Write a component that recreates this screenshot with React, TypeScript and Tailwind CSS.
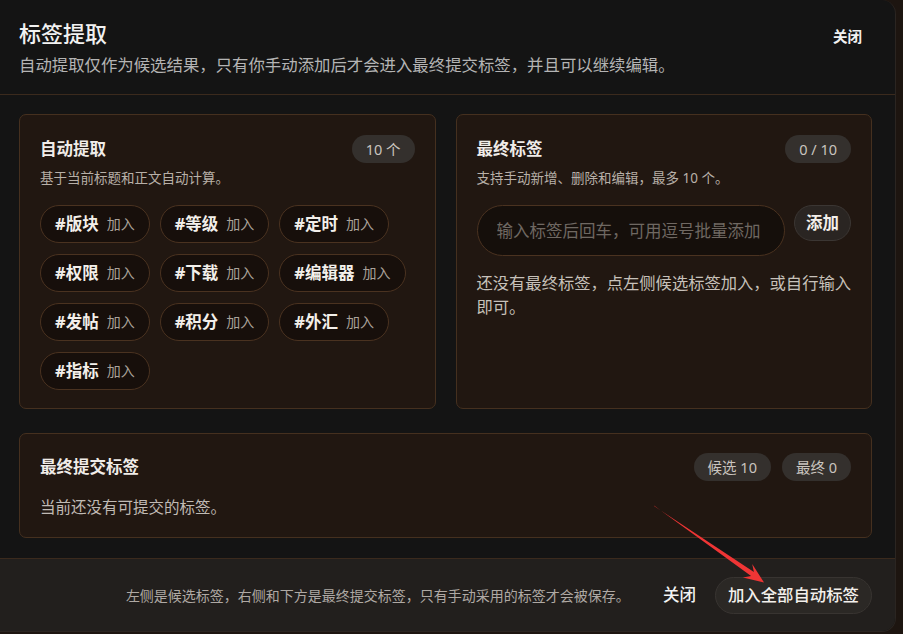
import React from "react";

const FONT = '"Noto Sans", "Noto Sans CJK SC", sans-serif';

const candidates = ["版块", "等级", "定时", "权限", "下载", "编辑器", "发帖", "积分", "外汇", "指标"];

function Pill({ children }: { children: React.ReactNode }) {
  return (
    <span className="inline-flex h-[28px] items-center rounded-full bg-[#34302d] px-[14px] text-[14.5px] leading-none text-[#c9c4bf]">
      {children}
    </span>
  );
}

function Chip({ label }: { label: string }) {
  return (
    <button className="flex h-[38px] items-center gap-[8px] rounded-full border border-[#4a3220] bg-[#170f0b] px-[14px]">
      <span className="text-[16.5px] font-bold leading-none text-[#f3efea]">#{label}</span>
      <span className="text-[14px] leading-none text-[#aaa29a]">加入</span>
    </button>
  );
}

export default function App() {
  return (
    <div className="relative h-[634px] w-[903px] overflow-hidden bg-[#1d1510]" style={{ fontFamily: FONT }}>
      <div className="flex h-[632px] w-[896px] flex-col overflow-hidden rounded-r-[14px] border-r border-b border-[#2b2521] bg-[#141414]">
        {/* header */}
        <div className="flex items-start justify-between border-b border-[#3b2a1d] pb-[17px] pl-[19px] pr-[23px] pt-[18px]">
          <div>
            <h1 className="text-[22px] font-medium leading-[30px] text-[#f1f1f1]">标签提取</h1>
            <p className="mt-[5px] text-[16.4px] leading-[24px] text-[#b4b4b4]">
              自动提取仅作为候选结果，只有你手动添加后才会进入最终提交标签，并且可以继续编辑。
            </p>
          </div>
          <button className="mt-[4px] h-[30px] px-[10px] text-[14.5px] font-semibold text-[#f1f1f1]">关闭</button>
        </div>

        {/* body */}
        <div className="flex-1 pb-[20px] pl-[19px] pr-[23px] pt-[19px]">
          <div className="grid grid-cols-2 gap-[20px]">
            {/* candidates */}
            <section className="h-[295px] rounded-[7px] border border-[#45301f] bg-[#211711] p-[20px]">
              <div className="flex h-[28px] items-center justify-between">
                <h2 className="text-[16.5px] font-semibold leading-none text-[#f0ece8]">自动提取</h2>
                <Pill>10 个</Pill>
              </div>
              <p className="mt-[5px] text-[13.5px] leading-[20px] text-[#b8b0a8]">基于当前标题和正文自动计算。</p>
              <div className="mt-[17px] flex flex-wrap gap-x-[10px] gap-y-[11px]">
                {candidates.map((c) => (
                  <Chip key={c} label={c} />
                ))}
              </div>
            </section>

            {/* final tags */}
            <section className="h-[295px] rounded-[7px] border border-[#45301f] bg-[#211711] p-[20px]">
              <div className="flex h-[28px] items-center justify-between">
                <h2 className="text-[16.5px] font-semibold leading-none text-[#f0ece8]">最终标签</h2>
                <Pill>0 / 10</Pill>
              </div>
              <p className="mt-[5px] text-[13.5px] leading-[20px] text-[#b8b0a8]">支持手动新增、删除和编辑，最多 10 个。</p>
              <div className="mt-[17px] flex items-start gap-[9px]">
                <input
                  className="h-[51px] min-w-0 flex-1 rounded-full border border-[#4a3220] bg-[#150f0b] pl-[19px] pr-[12px] text-[16.5px] text-[#e8e4e0] outline-none placeholder:text-[#6f6862]"
                  placeholder="输入标签后回车，可用逗号批量添加"
                  style={{ fontFamily: FONT }}
                />
                <button className="h-[36px] rounded-full border border-[#3b3633] bg-[#2a2522] px-[11px] text-[16.5px] font-bold leading-none text-[#f3efea]">
                  添加
                </button>
              </div>
              <p className="mt-[16px] w-[382px] text-[16.3px] leading-[23.5px] text-[#c7c1ba]">
                还没有最终标签，点左侧候选标签加入，或自行输入即可。
              </p>
            </section>
          </div>

          {/* submitted */}
          <section className="mt-[24px] rounded-[7px] border border-[#45301f] bg-[#211711] px-[20px] pb-[18px] pt-[19px]">
            <div className="flex h-[28px] items-center justify-between">
              <h2 className="text-[16.5px] font-semibold leading-none text-[#f0ece8]">最终提交标签</h2>
              <div className="flex gap-[11px]">
                <Pill>候选 10</Pill>
                <Pill>最终 0</Pill>
              </div>
            </div>
            <p className="mt-[14px] text-[15.5px] leading-[24px] text-[#c0bab4]">当前还没有可提交的标签。</p>
          </section>
        </div>

        {/* footer */}
        <div className="flex flex-1 items-center justify-end border-t border-[#3b2a1d] bg-[#221f1d] pl-[19px] pr-[23px]">
          <p className="mr-[22px] text-[14px] text-[#afa9a4]">
            左侧是候选标签，右侧和下方是最终提交标签，只有手动采用的标签才会被保存。
          </p>
          <button className="h-[37px] px-[11px] text-[16.5px] font-medium text-[#f3f3f3]">关闭</button>
          <button className="ml-[8px] h-[37px] rounded-full border border-[#383431] bg-[#2b2825] px-[12px] text-[16.4px] font-medium text-[#f3f0ec]">
            加入全部自动标签
          </button>
        </div>
      </div>

      {/* red annotation arrow */}
      <svg className="pointer-events-none absolute inset-0" width="903" height="634" viewBox="0 0 903 634">
        <polygon
          points="654,505.6 751.1,576.1 742.9,577.6 764,582.4 752.2,564 753.9,571.9 654.4,506.3"
          fill="#ef3535"
        />
      </svg>
    </div>
  );
}
